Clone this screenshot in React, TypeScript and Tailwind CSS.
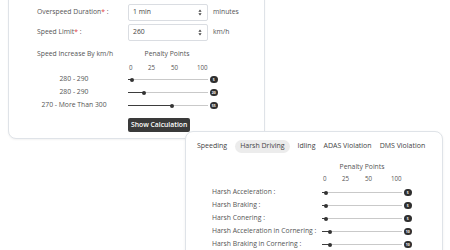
import React from "react";

const font = { fontFamily: '"Open Sans", "Noto Sans", sans-serif' };

function Arrows() {
  return (
    <svg width="4" height="7" viewBox="0 0 4 7" className="shrink-0">
      <path d="M2 0.5 L3.6 2.8 L0.4 2.8 Z" fill="#444" />
      <path d="M2 6.5 L3.6 4.2 L0.4 4.2 Z" fill="#444" />
    </svg>
  );
}

function Select({ value }: { value: string }) {
  return (
    <div className="flex h-[17px] w-[80px] items-center justify-between rounded-[2px] border border-[#dadde2] bg-white pl-[4px] pr-[5px] text-[6.8px] text-[#444]">
      <span>{value}</span>
      <Arrows />
    </div>
  );
}

function Slider({ value }: { value: number }) {
  const pct = `${value}%`;
  return (
    <div className="flex items-center gap-[2px]">
      <div className="relative h-[6px] w-[80px]">
        <div className="absolute left-0 right-0 top-[2.5px] h-[1px] bg-[#c9c9c9]" />
        <div
          className="absolute left-0 top-[2.3px] h-[1.4px] bg-[#3d3d3d]"
          style={{ width: pct }}
        />
        <div
          className="absolute top-[1px] h-[4px] w-[4px] -translate-x-1/2 rounded-full bg-[#333]"
          style={{ left: pct }}
        />
      </div>
      <div className="flex h-[7.5px] w-[7.5px] items-center justify-center rounded-full bg-[#2f2f2f] text-[3.5px] font-bold leading-none text-white">
        {value}
      </div>
    </div>
  );
}

function Scale() {
  return (
    <div className="relative h-[10px] w-[82px] text-[6.2px] leading-[10px] text-[#555]">
      <span className="absolute left-[1px] top-0">0</span>
      <span className="absolute left-[20px] top-0">25</span>
      <span className="absolute left-[43px] top-0">50</span>
      <span className="absolute left-[69px] top-0">100</span>
    </div>
  );
}

const speedRows = [
  { label: "280 - 290", value: 5 },
  { label: "280 - 290", value: 20 },
  { label: "270 - More Than 300", value: 55 },
];

const harshRows = [
  { label: "Harsh Acceleration :", value: 5 },
  { label: "Harsh Braking :", value: 5 },
  { label: "Harsh Conering :", value: 5 },
  { label: "Harsh Acceleration in Cornering :", value: 10 },
  { label: "Harsh Braking in Cornering :", value: 10 },
];

const tabs = ["Speeding", "Harsh Driving", "Idling", "ADAS Violation", "DMS Violation"];

export default function App() {
  return (
    <div
      className="relative h-[250px] w-[450px] overflow-hidden bg-white text-[#555]"
      style={font}
    >
      <div className="ml-[8px] mt-[-10px] w-[257px] rounded-[8px] border border-[#dfe3e8] bg-white pb-[6px] pl-[28px] pt-[13px] shadow-[0_1px_2px_rgba(0,0,0,0.05)]">
        <div className="flex h-[17px] items-center">
          <div className="w-[91px] text-[6.8px]">
            Overspeed Duration<span className="text-[#e23b3b]">*</span> :
          </div>
          <Select value="1 min" />
          <span className="ml-[5px] text-[6.8px]">minutes</span>
        </div>
        <div className="mt-[3px] flex h-[17px] items-center">
          <div className="w-[91px] text-[6.8px]">
            Speed Limit<span className="text-[#e23b3b]">*</span> :
          </div>
          <Select value="260" />
          <span className="ml-[5px] text-[6.8px]">km/h</span>
        </div>
        <div className="mt-[8px] flex h-[10px] items-center text-[6.8px]">
          <div className="w-[91px]">Speed Increase By km/h</div>
          <div className="w-[78px] text-center">Penalty Points</div>
        </div>
        <div className="mt-[4px] flex">
          <div className="w-[91px]" />
          <Scale />
        </div>
        <div className="flex flex-col">
          {speedRows.map((r, i) => (
            <div key={i} className="flex h-[13px] items-center">
              <div className="w-[74px] text-center text-[6.8px] leading-none">{r.label}</div>
              <div className="w-[17px]" />
              <Slider value={r.value} />
            </div>
          ))}
        </div>
        <div className="mt-[6px] flex">
          <div className="w-[91px]" />
          <button className="h-[14px] rounded-[2px] bg-[#3a3a3a] px-[3px] text-[6.8px] font-semibold text-white">
            Show Calculation
          </button>
        </div>
      </div>

      <div className="absolute left-[185px] top-[131px] h-[140px] w-[258px] rounded-[8px] border border-[#dfe3e8] bg-white pl-[11px] pt-[8px] shadow-[0_1px_3px_rgba(0,0,0,0.06)]">
        <div className="flex items-center gap-[8px] text-[7px] text-[#444]">
          {tabs.map((t) => (
            <div
              key={t}
              className={
                t === "Harsh Driving"
                  ? "flex h-[13px] items-center rounded-full bg-[#ececec] px-[5px]"
                  : "flex h-[13px] items-center"
              }
            >
              {t}
            </div>
          ))}
        </div>
        <div className="mt-[9px] flex pl-[15px] text-[6.8px]">
          <div className="w-[110px]" />
          <div className="w-[80px] text-center">Penalty Points</div>
        </div>
        <div className="mt-[2px] flex pl-[15px]">
          <div className="w-[110px]" />
          <Scale />
        </div>
        <div className="flex flex-col pl-[15px] pt-[2px]">
          {harshRows.map((r, i) => (
            <div key={i} className="flex h-[13px] items-center">
              <div className="w-[110px] text-[6.8px] leading-none">{r.label}</div>
              <Slider value={r.value} />
            </div>
          ))}
        </div>
      </div>
    </div>
  );
}
